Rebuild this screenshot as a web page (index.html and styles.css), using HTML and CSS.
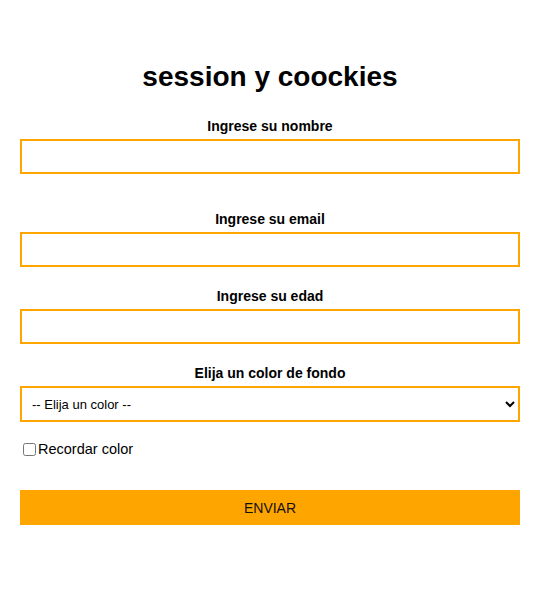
FILE: index.html
```html
<!DOCTYPE html>
<html lang="es">
<head>
<meta charset="utf-8">
<title>session y coockies</title>
<link rel="stylesheet" href="styles.css">
</head>
<body>
<main class="page">
  <h1 class="title">session y coockies</h1>
  <form class="form">
    <label class="label" for="nombre">Ingrese su nombre</label>
    <input class="field" type="text" id="nombre">
    <label class="label label-spaced" for="email">Ingrese su email</label>
    <input class="field" type="email" id="email">
    <label class="label label-gap" for="edad">Ingrese su edad</label>
    <input class="field" type="number" id="edad">
    <label class="label label-gap" for="color">Elija un color de fondo</label>
    <select class="field select" id="color">
      <option>-- Elija un color --</option>
    </select>
    <div class="remember">
      <input class="check" type="checkbox" id="recordar">
      <label class="check-label" for="recordar">Recordar color</label>
    </div>
    <button class="submit" type="submit">ENVIAR</button>
  </form>
</main>
</body>
</html>
```

FILE: styles.css
```css
* { box-sizing: border-box; }
html, body { margin: 0; padding: 0; background: #fff; }
body { font-family: "Liberation Sans", Arial, sans-serif; color: #000; }
.page { width: 500px; margin-left: 20px; padding-top: 61px; }
.title { margin: 0; font-size: 28px; line-height: 32px; font-weight: bold; text-align: center; }
.form { display: flex; flex-direction: column; margin-top: 25px; }
.label { display: block; font-size: 14px; line-height: 16px; font-weight: bold; text-align: center; margin-bottom: 5px; }
.label-spaced { margin-top: 37px; }
.label-gap { margin-top: 21px; }
.field { display: block; width: 500px; height: 35px; border: 2px solid #ffa500; background: #fff; margin: 0; padding: 0 12px; font-family: "Liberation Sans", Arial, sans-serif; font-size: 13px; outline: none; border-radius: 0; }
.select { height: 36px; color: #000; font-size: 13px; padding: 0 6px; }
.remember { display: flex; align-items: center; margin-top: 18px; padding-left: 3px; height: 18px; }
.check { margin: 0 2px 0 0; width: 13px; height: 13px; }
.check-label { font-size: 14.5px; line-height: 18px; }
.submit { margin-top: 32px; width: 500px; height: 35px; border: none; background: #ffa500; color: #111; font-family: "Liberation Sans", Arial, sans-serif; font-size: 14px; padding: 0; border-radius: 0; }
```
